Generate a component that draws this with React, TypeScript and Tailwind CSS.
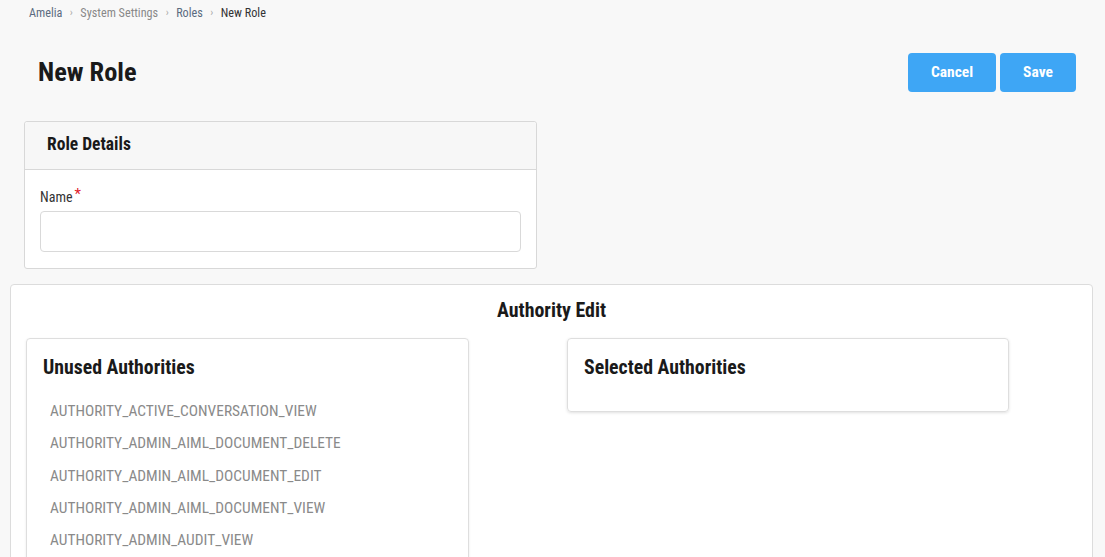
import React from 'react';

const authorities = [
  'AUTHORITY_ACTIVE_CONVERSATION_VIEW',
  'AUTHORITY_ADMIN_AIML_DOCUMENT_DELETE',
  'AUTHORITY_ADMIN_AIML_DOCUMENT_EDIT',
  'AUTHORITY_ADMIN_AIML_DOCUMENT_VIEW',
  'AUTHORITY_ADMIN_AUDIT_VIEW',
];

const font = "font-['Roboto_Condensed','Liberation_Sans_Narrow','DejaVu_Sans_Condensed',Roboto,sans-serif] [font-stretch:condensed]";

export default function App() {
  return (
    <div className={`h-[557px] overflow-hidden bg-[#f8f8f8] text-[#222] ${font}`}>
      {/* Breadcrumb */}
      <nav className="flex items-center gap-[7.5px] pl-[29px] pt-[5px] text-[12.2px] leading-[16px]">
        <span className="text-[#5b6b80]">Amelia</span>
        <span className="text-[#aaa] text-[11px]">›</span>
        <span className="text-[#888]">System Settings</span>
        <span className="text-[#aaa] text-[11px]">›</span>
        <span className="text-[#5b6b80]">Roles</span>
        <span className="text-[#aaa] text-[11px]">›</span>
        <span className="text-[#333]">New Role</span>
      </nav>

      {/* Header */}
      <div className="flex items-center justify-between pl-[38px] pr-[29px] mt-[32px]">
        <h1 className="text-[26.4px] font-bold text-[#1a1a1a] leading-[30px] -mt-[2px]">New Role</h1>
        <div className="flex gap-[4px]">
          <button className="h-[39px] w-[88px] rounded-[4px] bg-[#3ea6f5] text-white text-[15.5px] font-bold">Cancel</button>
          <button className="h-[39px] w-[76px] rounded-[4px] bg-[#3ea6f5] text-white text-[15.5px] font-bold">Save</button>
        </div>
      </div>

      {/* Role details */}
      <section className="ml-[24px] mt-[29px] w-[513px] border border-[#d8d8d8] rounded-[3px] bg-white">
        <div className="h-[48px] flex items-center px-[22px] pb-[3px] bg-[#f7f7f7] border-b border-[#d8d8d8] rounded-t-[3px]">
          <h2 className="text-[17.5px] font-bold text-[#1a1a1a]">Role Details</h2>
        </div>
        <div className="px-[15px] pt-[17px] pb-[16px]">
          <label className="flex items-start text-[14px] text-[#333] leading-[20px]">
            Name<span className="text-[#e0202a] ml-[2px] text-[15px] leading-[14px]">*</span>
          </label>
          <input className="mt-[4px] block w-[481px] h-[41px] border border-[#d9d9d9] rounded-[4px] bg-white" />
        </div>
      </section>

      {/* Authority edit */}
      <section className="ml-[10px] mt-[15px] w-[1083px] h-[400px] border border-[#dcdcdc] rounded-[4px] bg-white">
        <h2 className="text-center text-[19.9px] font-bold text-[#1a1a1a] mt-[14px] leading-[24px]">Authority Edit</h2>
        <div className="grid grid-cols-[443px_98px_442px] pl-[15px] mt-[15px] items-start">
          <div className="border border-[#dedede] rounded-[4px] shadow-[0_1px_3px_rgba(0,0,0,0.08)] h-[300px]">
            <h3 className="text-[19.8px] font-bold text-[#1a1a1a] pl-[16px] pt-[17px] leading-[24px]">Unused Authorities</h3>
            <ul className="mt-[21px] pl-[23px] flex flex-col gap-[12.3px]">
              {authorities.map((a) => (
                <li key={a} className="text-[15.4px] text-[#8a8a8a] leading-[20px]">{a}</li>
              ))}
            </ul>
          </div>
          <div />
          <div className="h-[74px] border border-[#dedede] rounded-[4px] shadow-[0_1px_3px_rgba(0,0,0,0.12)]">
            <h3 className="text-[19.8px] font-bold text-[#1a1a1a] pl-[16px] pt-[17px] leading-[24px]">Selected Authorities</h3>
          </div>
        </div>
      </section>
    </div>
  );
}
